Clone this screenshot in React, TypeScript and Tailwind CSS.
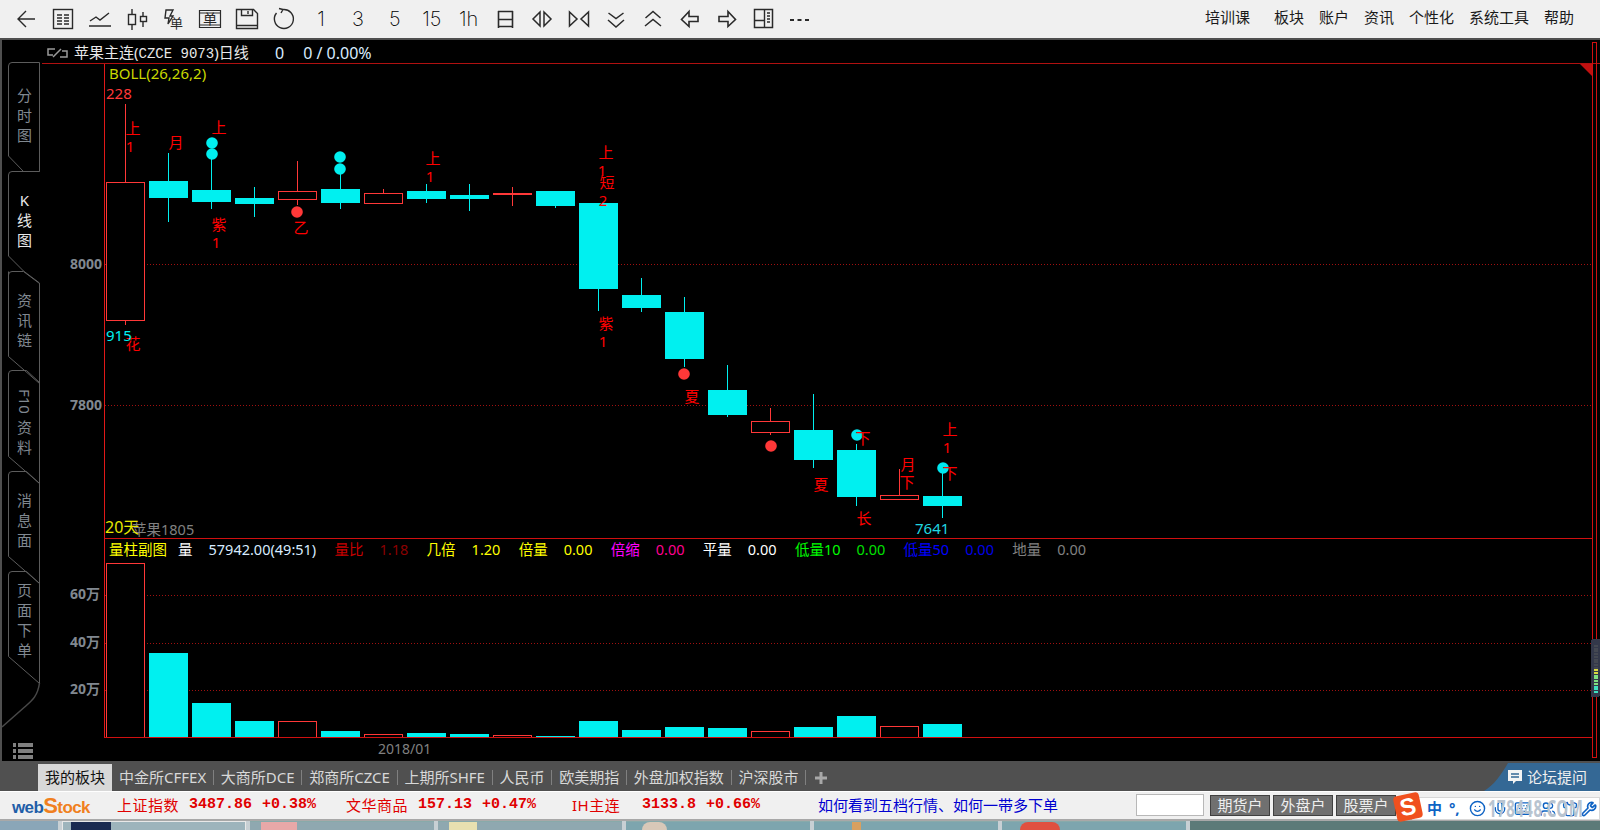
import { Keyboard, Mic, Smile, Users, Wrench, Shirt } from 'lucide-react'

const cn = "font-['Noto_Sans','Noto_Sans_CJK_SC',sans-serif]"

// candle data in page pixels: top, bottom of body, high, low
const candles = [
  { up: true, t: 182, b: 320, h: 104, l: 325 },
  { up: false, t: 181, b: 198, h: 153, l: 222 },
  { up: false, t: 190, b: 202, h: 150, l: 209 },
  { up: false, t: 198, b: 204, h: 187, l: 217 },
  { up: true, t: 191, b: 199, h: 161, l: 205 },
  { up: false, t: 189, b: 203, h: 173, l: 209 },
  { up: true, t: 193, b: 203, h: 189, l: 203 },
  { up: false, t: 191, b: 199, h: 184, l: 203 },
  { up: false, t: 195, b: 199, h: 184, l: 211 },
  { up: true, t: 193, b: 194, h: 187, l: 206 },
  { up: false, t: 191, b: 206, h: 191, l: 208 },
  { up: false, t: 203, b: 289, h: 203, l: 311 },
  { up: false, t: 295, b: 308, h: 278, l: 312 },
  { up: false, t: 312, b: 359, h: 297, l: 367 },
  { up: false, t: 390, b: 415, h: 365, l: 417 },
  { up: true, t: 421, b: 432, h: 408, l: 435 },
  { up: false, t: 430, b: 460, h: 394, l: 468 },
  { up: false, t: 450, b: 497, h: 444, l: 506 },
  { up: true, t: 495, b: 499, h: 469, l: 500 },
  { up: false, t: 496, b: 506, h: 470, l: 518 },
]

const volumeTops = [563, 653, 703, 721, 721, 731, 734, 733, 734, 735, 736, 721, 730, 727, 728, 731, 727, 716, 726, 724]

const dots = [
  { x: 212, y: 143, c: '#00f0f0' },
  { x: 212, y: 154, c: '#00f0f0' },
  { x: 340, y: 157, c: '#00f0f0' },
  { x: 340, y: 169, c: '#00f0f0' },
  { x: 297, y: 212, c: '#ff3838' },
  { x: 684, y: 374, c: '#ff3838' },
  { x: 771, y: 446, c: '#ff3838' },
  { x: 857, y: 435, c: '#00e8f0' },
  { x: 943, y: 468, c: '#00e8f0' },
]

const marks = [
  ['上', 133, 134], ['1', 130, 152], ['月', 176, 148], ['上', 219, 133], ['紫', 219, 230], ['1', 216, 248],
  ['乙', 301, 233], ['上', 433, 164], ['1', 430, 182], ['上', 606, 158], ['1', 602, 176], ['短', 607, 188],
  ['2', 603, 206], ['紫', 606, 329], ['1', 603, 347], ['夏', 692, 402], ['夏', 821, 490], ['下', 863, 444],
  ['月', 908, 470], ['下', 907, 488], ['长', 864, 524], ['上', 950, 435], ['1', 947, 453], ['下', 950, 479],
  ['花', 133, 349],
] as const

const tabs = [
  { chars: ['分', '时', '图'], cls: 'h-[109px] pt-[23px] text-[#808890]' },
  { chars: ['K', '线', '图'], cls: 'h-[100px] pt-[19px] text-[#e8e8e8]' },
  { chars: ['资', '讯', '链'], cls: 'h-[99px] pt-[19px] text-[#808890]' },
  { chars: ['资', '料'], rot: 'F10', cls: 'h-[101px] pt-[19px] text-[#808890]' },
  { chars: ['消', '息', '面'], cls: 'h-[100px] pt-[19px] text-[#808890]' },
  { chars: ['页', '面', '下', '单'], cls: 'h-[112px] pt-[9px] text-[#808890]' },
]

const legend = [
  ['量', '#ffffff', '57942.00(49:51)', '#d8ecff'],
  ['量比', '#c80000', '1.18', '#8b0000'],
  ['几倍', '#ffff00', '1.20', '#ffff00'],
  ['倍量', '#ffff00', '0.00', '#ffff00'],
  ['倍缩', '#ff00ff', '0.00', '#ff0090'],
  ['平量', '#ffffff', '0.00', '#ffffff'],
  ['低量10', '#00ff00', '0.00', '#00e000'],
  ['低量50', '#0000ff', '0.00', '#0000e8'],
  ['地量', '#808080', '0.00', '#808080'],
]

const boards = ['中金所CFFEX', '大商所DCE', '郑商所CZCE', '上期所SHFE', '人民币', '欧美期指', '外盘加权指数', '沪深股市']
const menu = ['板块', '账户', '资讯', '个性化', '系统工具', '帮助']

function Icon({ children }: { children: React.ReactNode }) {
  return (
    <div className="flex h-[38px] w-[36.9px] shrink-0 items-center justify-center">
      <svg width="24" height="24" viewBox="0 0 24 24" fill="none" stroke="#2a2a2a" strokeWidth="1.4">
        {children}
      </svg>
    </div>
  )
}

function Digit({ label }: { label: string }) {
  return (
    <div className="flex h-[38px] w-[36.9px] shrink-0 items-center justify-center font-['Inter',sans-serif] text-[20px] font-extralight text-[#000]">
      {label}
    </div>
  )
}

function Toolbar() {
  return (
    <div className={`flex h-[38px] items-center justify-between bg-[#f0f0f0] pl-[7.5px] pr-[26px] ${cn}`}>
      <div className="flex">
        <Icon><path d="M21 12H4M12 4l-8 8 8 8" /></Icon>
        <Icon>
          <rect x="2.5" y="2.5" width="19" height="19" />
          <path d="M6 8h5M13 8h5M6 11h5M13 11h5M6 14h5M13 14h5M6 17h5M13 17h5" />
        </Icon>
        <Icon><path d="M2 14l6-4 4 3 9-7M1 19h22" /></Icon>
        <Icon>
          <rect x="3.5" y="7.5" width="7" height="10" />
          <path d="M7 2v5M7 18v5M18 5v5M18 15v5" />
          <rect x="15.5" y="9.5" width="6" height="5" />
        </Icon>
        <Icon>
          <path d="M4 3h7L8 9h3l-5 8 1-6H3z" />
          <text x="8" y="21" fontSize="13" fill="#2a2a2a" stroke="none">单</text>
        </Icon>
        <Icon>
          <path d="M1.5 3.5h21v17h-21zM1.5 6h21M1.5 18h21" strokeWidth="1.2" />
          <text x="5" y="17" fontSize="14" fill="#2a2a2a" stroke="none">单</text>
        </Icon>
        <Icon>
          <path d="M1.5 2.5h17l4 4v15h-21z" />
          <path d="M6.5 2.5v6h11v-6M13 4v3M1.5 18.5h21" />
        </Icon>
        <Icon>
          <path d="M11 2.5A9.5 9.5 0 1 1 4.5 6M11 2.5L7 1.5M11 2.5l-2 3.5" />
        </Icon>
        <Digit label="1" />
        <Digit label="3" />
        <Digit label="5" />
        <Digit label="15" />
        <Digit label="1h" />
        <Icon><path d="M4 4.5h15M4.5 4v17M18.5 4v17M4 12.5h15M4 19.5h15" strokeWidth="1.6" /></Icon>
        <Icon><path d="M10 5l-7 7 7 7zM14 5l7 7-7 7z" strokeWidth="1.5" /></Icon>
        <Icon><path d="M2.5 5v14L10 12zM21.5 5v14L14 12z" strokeWidth="1.5" /></Icon>
        <Icon><path d="M4.5 6l7.500 5.500 7.500-5.500M4 13l8 7 8-7" strokeWidth="1.5" /></Icon>
        <Icon><path d="M4.500 11l7.500-6.500 7.500 6.500M4 19l8-6.500 8 6.500" strokeWidth="1.5" /></Icon>
        <Icon><path d="M11 4.500L3.500 12.500l7.500 7v-5h9v-5h-9z" strokeWidth="1.6" /></Icon>
        <Icon><path d="M13 4.500l7.500 8-7.500 7v-5h-9v-5h9z" strokeWidth="1.6" /></Icon>
        <Icon>
          <rect x="2.500" y="2.500" width="18" height="18" strokeWidth="1.5" />
          <path d="M12.500 2.500v18M2.500 13.500h10M15 6h3M15 9h3M15 12h3M15 15h3" />
        </Icon>
        <Icon><path d="M1 13h4M8.500 13h4M16 13h4" strokeWidth="2" /></Icon>
      </div>
      <div className="mb-[3px] flex items-center gap-[15px] text-[15px] text-[#1a1a1a]">
        <span className="mr-[9px]">培训课</span>
        {menu.map((m) => (
          <span key={m}>{m}</span>
        ))}
      </div>
    </div>
  )
}

function Sidebar() {
  return (
    <div className={`relative flex w-[40px] shrink-0 flex-col pt-[22px] text-[15px] leading-[20px] ${cn}`}>
      <svg className="absolute left-0 top-0" width="40" height="721" viewBox="2 40 40 721" fill="none" stroke="#5c5c5c">
        <path d="M39.500 62.500H12a3.500 3.500 0 0 0-3.500 3.500v90l15 15.500H39.500V62.500" />
        <path d="M39.500 171.500H12a3.500 3.500 0 0 0-3.500 3.500v81l15 15 16 12" />
        <path d="M8.500 271.500v85l31 27M39.500 283v400M23.500 271.500H12a3.500 3.500 0 0 0-3.500 3.500M23.500 271.500l16 12" />
        <path d="M8.500 373.500v83l31 27M26.500 370.500H12a3.500 3.500 0 0 0-3.500 3.500M26.500 370.500l13 12" />
        <path d="M8.500 474.500v82l31 27M26.500 471.500H12a3.500 3.500 0 0 0-3.500 3.500M26.500 471.500l13 12" />
        <path d="M8.500 574.500v82l31 27M26.500 571.500H12a3.500 3.500 0 0 0-3.500 3.500M26.500 571.500l13 12" />
        <path d="M39.500 683c-2 14-8 18-16 25L2 727" strokeWidth="1.5" stroke="#484848" />
      </svg>
      {tabs.map((tab, i) => (
        <div key={i} className={`relative flex flex-col items-center pl-[5px] ${tab.cls}`}>
          {tab.rot && <span className="mb-[3px] [writing-mode:vertical-rl]">{tab.rot}</span>}
          {tab.chars.map((c, j) => (
            <span key={j}>{c}</span>
          ))}
        </div>
      ))}
      <div className="absolute left-[11px] top-[703px] flex flex-col gap-[2px]">
        {[0, 1, 2].map((i) => (
          <div key={i} className="flex gap-[2px]">
            <div className="h-[4px] w-[3px] bg-[#808080]" />
            <div className="h-[4px] w-[15px] bg-[#808080]" />
          </div>
        ))}
      </div>
    </div>
  )
}

function PricePlot() {
  return (
    <svg className={`block ${cn}`} width="1487" height="474" viewBox="105 64 1487 474">
      <line x1="105" x2="1592" y1="264.500" y2="264.500" stroke="#a01010" strokeDasharray="1 2" />
      <line x1="105" x2="1592" y1="405.500" y2="405.500" stroke="#a01010" strokeDasharray="1 2" />
      <path d="M1580 64h12v12z" fill="#c01010" />
      {candles.map((c, i) => {
        const x = 106 + 43 * i
        const mid = x + 19.5
        const color = c.up ? '#ff3838' : '#00f0f0'
        return (
          <g key={i} shapeRendering="crispEdges">
            <line x1={mid} x2={mid} y1={c.h} y2={c.l} stroke={color} />
            {c.up ? (
              <rect x={x + 0.5} y={c.t + 0.5} width="38" height={c.b - c.t} fill="#000" stroke={color} />
            ) : (
              <rect x={x} y={c.t} width="39" height={c.b - c.t} fill={color} />
            )}
          </g>
        )
      })}
      {dots.map((d, i) => (
        <circle key={i} cx={d.x} cy={d.y} r="5.800" fill={d.c} />
      ))}
      {marks.map(([t, x, y], i) => (
        <text key={i} x={x} y={y} fontSize="15" fill="#ff0000" textAnchor="middle">{t}</text>
      ))}
      <text x="109" y="79" fontSize="15" fill="#c8d800">BOLL(26,26,2)</text>
      <text x="106" y="99" fontSize="15" fill="#ff3838">228</text>
      <text x="106" y="341" fontSize="15" fill="#00f0f0">915</text>
      <text x="915" y="534" fontSize="15" fill="#20d8e0">7641</text>
      <text x="132" y="535" fontSize="14.500" fill="#808080">苹果1805</text>
      <text x="105" y="533" fontSize="16" fill="#e8e800">20天</text>
    </svg>
  )
}

function VolumePlot() {
  return (
    <svg className="block" width="1487" height="198" viewBox="105 539 1487 198">
      {[595, 643, 690].map((y) => (
        <line key={y} x1="105" x2="1592" y1={y + 0.5} y2={y + 0.5} stroke="#a01010" strokeDasharray="1 2" />
      ))}
      {volumeTops.map((top, i) => {
        const x = 106 + 43 * i
        return candles[i].up ? (
          <rect key={i} x={x + 0.5} y={top + 0.5} width="38" height={737 - top} fill="#000" stroke="#ff3838" shapeRendering="crispEdges" />
        ) : (
          <rect key={i} x={x} y={top} width="39" height={737 - top} fill="#00f0f0" shapeRendering="crispEdges" />
        )
      })}
    </svg>
  )
}

function Chart() {
  return (
    <div className={`relative flex min-w-0 flex-1 flex-col ${cn}`}>
      <div className="flex h-[24px] items-center gap-[6px] border-b border-[#b01010] pl-[5px] pt-[2px] text-[15px] text-[#e8e8e8]">
        <svg width="21" height="12" viewBox="0 0 21 12" fill="none" stroke="#9a9a9a" strokeWidth="1.500">
          <path d="M8 2H1v6h5M13 10h7V4h-5M6 10l8-8" />
        </svg>
        <span className="w-[195px]">
          苹果主连(<span className="font-['Liberation_Mono',monospace] text-[14px]">CZCE 9073</span>)日线
        </span>
        <span className="text-[16px] text-[#d8ecff]">0</span>
        <span className="ml-[13px] text-[16px] text-[#d8ecff]">0 / 0.00%</span>
      </div>

      <div className="flex h-[474px]">
        <div className="relative w-[62px] shrink-0 text-[14px] font-bold text-[#808890]">
          <span className="absolute right-[2px] top-[189px]">8000</span>
          <span className="absolute right-[2px] top-[330px]">7800</span>
        </div>
        <div className="border-l border-[#e01818]">
          <PricePlot />
        </div>
      </div>

      <div className="flex h-[200px]">
        <div className="relative w-[62px] shrink-0 text-[14px] font-bold text-[#808890]">
          <span className="absolute right-[4px] top-[45px]">60万</span>
          <span className="absolute right-[4px] top-[93px]">40万</span>
          <span className="absolute right-[4px] top-[140px]">20万</span>
        </div>
        <div className="relative border-y border-l border-y-[#d01010] border-l-[#e01818]">
          <VolumePlot />
          <div className="absolute left-[4px] top-0 flex h-[21px] items-center text-[14.500px] whitespace-nowrap">
            <span className="mr-[11px] text-[#ffff00]">量柱副图</span>
            <div className="flex items-center gap-[18.300px]">
              {legend.map(([label, lc, value, vc]) => (
                <div key={label} className="flex gap-[16px]">
                  <span style={{ color: lc }}>{label}</span>
                  <span style={{ color: vc }}>{value}</span>
                </div>
              ))}
            </div>
          </div>
        </div>
      </div>

      <div className="h-[23px] pl-[336px] text-[14px] leading-[22px] text-[#808080]">2018/01</div>

      <div className="absolute right-[3px] top-[2px] h-[716px] w-[5px] border border-[#d01010]" />
      <svg className="absolute right-0 top-[599px]" width="9" height="58" viewBox="0 0 9 58" shapeRendering="crispEdges">
        <rect width="9" height="58" rx="2" fill="#33384a" />
        {Array.from({ length: 18 }).map((_, i) => (
          <rect
            key={i}
            x="3"
            y={Math.round(6 + i * 2.7)}
            width="4"
            height="2"
            fill={i < 9 ? '#444852' : i < 11 ? '#d8d840' : i < 15 ? '#80e080' : '#40e0c0'}
          />
        ))}
      </svg>
    </div>
  )
}

function BoardTabs() {
  return (
    <div className={`flex h-[30px] items-end justify-between bg-[#505050] pl-[38px] ${cn}`}>
      <div className="flex h-[27px] items-center text-[15px] text-[#d8d8d8]">
        <div className="flex h-full w-[74px] items-center justify-center bg-[#d8d8d8] text-[#111]">我的板块</div>
        <div className="ml-[7px] flex items-center">
          {boards.map((b) => (
            <div key={b} className="flex items-center">
              <span>{b}</span>
              <span className="mx-[6.800px] h-[15px] w-px bg-[#808080]" />
            </div>
          ))}
        </div>
        <svg className="ml-[1px]" width="14" height="14" viewBox="0 0 14 14">
          <path d="M5.500 1h3v4.500H13v3H8.500V13h-3V8.500H1v-3h4.500z" fill="#a8a8a8" />
        </svg>
      </div>
      <div className="relative flex h-[28px] w-[116px] items-center justify-end gap-[5px] pr-[13px] text-[15px] text-[#f0f0f0]">
        <svg className="absolute left-0 top-0" width="116" height="28" viewBox="0 0 116 28">
          <path d="M0 28C10 22 17 12 24 0h92v28z" fill="#346895" />
        </svg>
        <svg className="relative" width="14" height="15" viewBox="0 0 14 15">
          <path d="M0 0h14v11H8l-3 3v-3H0z" fill="#f4f4f4" />
          <path d="M3 4h8M3 7h8" stroke="#346895" strokeWidth="1.500" />
        </svg>
        <span className="relative">论坛提问</span>
      </div>
    </div>
  )
}

function Quote({ name, price, pct, cls }: { name: string; price: string; pct: string; cls: string }) {
  return (
    <div className={`flex items-center gap-[10px] ${cls}`}>
      <span className="text-[15px] tracking-[0.5px] text-[#e00000] whitespace-nowrap">{name}</span>
      <span className="font-['Liberation_Mono',monospace] text-[15px] font-bold text-[#e00000]">{price}</span>
      <span className="font-['Liberation_Mono',monospace] text-[15px] font-bold text-[#e00000]">{pct}</span>
    </div>
  )
}

function Ticker() {
  return (
    <div className={`relative flex h-[30px] items-center border-t border-b-2 border-t-[#ffffff] border-b-[#a8a8a8] bg-[#f0f0f0] pl-[12px] ${cn}`}>
      <div className="w-[105px] font-['Liberation_Sans',sans-serif] text-[17px] leading-none font-bold tracking-[-0.6px]">
        <span className="text-[#1f5ea8]">web</span>
        <span className="text-[22px] text-[#f08020]">S</span>
        <span className="text-[#f08020]">tock</span>
      </div>
      <Quote name="上证指数" price="3487.86" pct="+0.38%" cls="w-[229px]" />
      <Quote name="文华商品" price="157.13" pct="+0.47%" cls="w-[226px]" />
      <Quote name="IH主连" price="3133.8" pct="+0.66%" cls="w-[246px] [&>span:first-child]:w-[60px]" />
      <span className="text-[15px] text-[#0000d0]">如何看到五档行情、如何一带多下单</span>
      <div className="absolute left-[1136px] top-[2px] h-[22px] w-[68px] border border-[#b8b8b8] bg-white" />
      <div className="absolute left-[1210px] top-[3px] flex gap-[3px] text-[15px] text-[#eeeeee]">
        {['期货户', '外盘户', '股票户'].map((b) => (
          <div key={b} className="flex h-[21px] w-[60px] items-center justify-center border border-[#404040] bg-[#707070]">
            {b}
          </div>
        ))}
      </div>
      <div className="absolute left-[1412px] top-[5px] flex h-[23px] w-[188px] items-center border border-[#d8d8d8] bg-white pl-[14px] text-[#0e63c4]">
        <span className="w-[22px] text-[15px] font-bold">中</span>
        <span className="w-[20px] text-[15px] font-bold">°,</span>
        <Smile size={17} strokeWidth={2} className="mr-[6px]" />
        <Mic size={16} strokeWidth={2} className="mr-[6px]" />
        <Keyboard size={17} strokeWidth={2} className="mr-[9px]" />
        <Users size={16} strokeWidth={2} className="mr-[6px]" />
        <Shirt size={16} strokeWidth={2} className="mr-[3px]" />
        <Wrench size={16} strokeWidth={2.500} />
        <span className="absolute left-[75px] top-[-2px] scale-y-150 text-[15px] leading-[24px] font-bold tracking-[0.5px] whitespace-nowrap text-[#b8c4d0]">
          178448.COM
        </span>
      </div>
      <div className="absolute left-[1395px] top-[2px] flex h-[26px] w-[26px] rotate-[-12deg] items-center justify-center rounded-[4px] bg-[#f0501e] font-['Liberation_Sans',sans-serif] text-[24px] leading-none font-bold text-white">
        S
      </div>
    </div>
  )
}

function Thumbs() {
  return (
    <div className="flex h-[9px] gap-[4px] overflow-hidden bg-[#c8d0d4]">
      <div className="w-[58px] bg-[#8aa6b8]" />
      <div className="w-[184px] border-x border-t border-[#e8e8e8] bg-[#9db4bc] pl-[8px]">
        <div className="h-full w-[40px] bg-[#1a2a50]" />
      </div>
      <div className="w-[184px] border-t border-[#8aa] bg-[#8fa8b0] pl-[11px]">
        <div className="h-full w-[36px] bg-[#e8a8a8]" />
      </div>
      <div className="w-[184px] border-t border-[#8aa] bg-[#8fa8b0] pl-[11px]">
        <div className="h-full w-[28px] bg-[#e8e0b0]" />
      </div>
      <div className="w-[184px] border-t border-[#8aa] bg-[#7da5ae] pl-[16px]">
        <div className="h-full w-[25px] rounded-t-full bg-[#d8c8b8]" />
      </div>
      <div className="w-[184px] border-t border-[#8aa] bg-[#7da5ae] pl-[38px]">
        <div className="h-full w-[9px] bg-[#d8a060]" />
      </div>
      <div className="w-[184px] border-t border-[#8aa] bg-[#7da5ae] pl-[18px]">
        <div className="h-full w-[40px] rounded-t-full bg-[#e05040]" />
      </div>
      <div className="flex-1 bg-[#5c7a78]" />
    </div>
  )
}

export default function App() {
  return (
    <div className="flex h-[830px] w-[1600px] flex-col overflow-hidden bg-black">
      <Toolbar />
      <div className="flex h-[723px] border-l-2 border-t-2 border-[#4f4f4f] bg-black">
        <Sidebar />
        <Chart />
      </div>
      <BoardTabs />
      <Ticker />
      <Thumbs />
    </div>
  )
}
